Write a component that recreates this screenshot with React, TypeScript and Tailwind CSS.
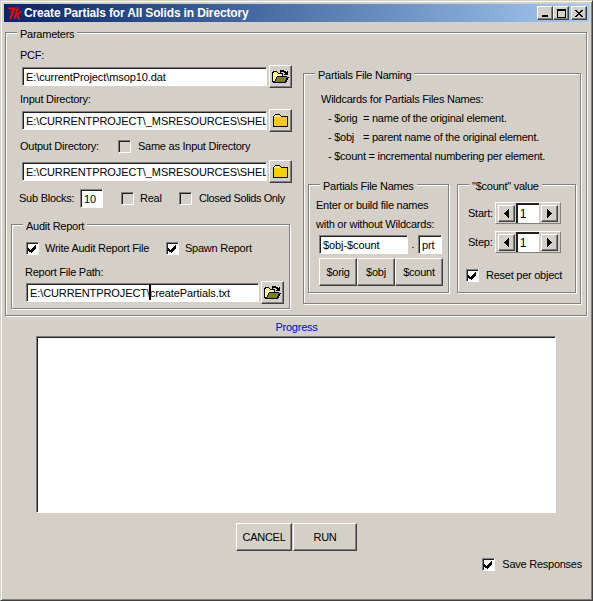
import React from 'react';

const FONT = "font-['Liberation_Sans',Arial,sans-serif] text-[11px] tracking-[-0.25px] text-black";
const BG = 'bg-[#d4d0c8]';
const RAISED = 'border border-[#404040] border-t-white border-l-white bg-[#d4d0c8] shadow-[inset_-1px_-1px_0_#808080]';
const SUNKEN = 'border border-white border-t-[#808080] border-l-[#808080] shadow-[inset_1px_1px_0_#202020]';

function Group({ title, legendLeft, className, children }: { title: string; legendLeft: string; className: string; children?: React.ReactNode }) {
  return (
    <div className={`relative border border-[#808080] shadow-[1px_1px_0_#fff,inset_1px_1px_0_#fff] ${className}`}>
      <span className={`absolute -top-[5px] ${legendLeft} ${BG} px-[3px] leading-[13px] whitespace-nowrap`}>{title}</span>
      {children}
    </div>
  );
}

function Entry({ text, className, children }: { text?: string; className: string; children?: React.ReactNode }) {
  return (
    <div className={`${SUNKEN} bg-white h-[19px] pl-[3px] leading-[18px] overflow-hidden whitespace-nowrap tracking-[-0.1px] ${className}`}>
      {text}
      {children}
    </div>
  );
}

function Check({ checked, className }: { checked?: boolean; className?: string }) {
  return (
    <div className={`${SUNKEN} w-[13px] h-[13px] shrink-0 ${checked ? 'bg-white' : 'bg-[#d4d0c8]'} ${className ?? ''}`}>
      {checked && (
        <svg width="11" height="11" viewBox="0 0 11 11" shapeRendering="crispEdges">
          <path d="M1 5h1v1h1v1h1V6h1V5h1V4h1V3h1V2h1v3H9v1H8v1H7v1H6v1H5v1H4v-1H3V9H2V8H1z" fill="#000" transform="translate(0 -0.5)" />
        </svg>
      )}
    </div>
  );
}

function FolderClosed() {
  return (
    <svg width="17" height="15" viewBox="0 0 17 15" shapeRendering="crispEdges">
      <path d="M1 3h1V2h1V1h5v1h1v1h7v11H1z" fill="#000" />
      <path d="M2 4h13v9H2z" fill="#ffcc00" />
      <path d="M3 3V2h5v1h1v1H2V3z" fill="#ffe680" />
    </svg>
  );
}

function FolderOpen() {
  return (
    <svg width="17" height="15" viewBox="0 0 17 15" shapeRendering="crispEdges">
      <path d="M0 3h1V2h4v1h1v1h5v3h4v1h2v1h-1v2h-1v2h-1v1H1v-1H0z" fill="#000" />
      <path d="M1 4h1V3h3v1h1v1h4v2H5v1H4v2H3v2H1z" fill="#ffff99" />
      <path d="M5 8h10v1h-1v2h-1v2H3v-1h1v-2h1z" fill="#808000" />
      <path d="M8 1h4v1h2v1h1V2h1v4h-4V5h1V4h-1V3H9v1H8z" fill="#000" />
    </svg>
  );
}

function IconButton({ open }: { open?: boolean }) {
  return (
    <div className={`${RAISED} w-[23px] h-[23px] flex items-center justify-center shrink-0`}>
      {open ? <FolderOpen /> : <FolderClosed />}
    </div>
  );
}

function Spin({ label }: { label: string }) {
  return (
    <div className="flex items-center pl-[10px]">
      <span className="w-[27px]">{label}</span>
      <div className="border border-white border-r-[#808080] border-b-[#808080] w-[66px] h-[22px] flex items-center px-[2px]">
        <div className={`${RAISED} w-[17px] h-[17px] flex items-center justify-center`}>
          <svg width="6" height="9" viewBox="0 0 6 9" shapeRendering="crispEdges"><path d="M5 0h1v9H5V8H4V7H3V6H2V5H1V4h1V3h1V2h1V1h1z" fill="#000" /></svg>
        </div>
        <div className="bg-white border-t-2 border-l-2 border-[#202020] w-[24px] h-[20px] mx-[1px] pl-[2px] leading-[18px] tracking-normal text-[12px]">1</div>
        <div className={`${RAISED} w-[17px] h-[17px] ml-[1px] flex items-center justify-center`}>
          <svg width="6" height="9" viewBox="0 0 6 9" shapeRendering="crispEdges"><path d="M0 0h1v1h1v1h1v1h1v1h1v1H4v1H3v1H2v1H1v1H0z" fill="#000" /></svg>
        </div>
      </div>
    </div>
  );
}

function Btn({ label, className }: { label: string; className: string }) {
  return <div className={`${RAISED} flex items-center justify-center ${className}`}>{label}</div>;
}

function App() {
  return (
    <div className={`${FONT} ${BG} w-[593px] h-[601px] overflow-hidden border border-[#d4d0c8] border-r-[#404040] border-b-[#404040] shadow-[inset_1px_1px_0_#fff,inset_-1px_-1px_0_#808080] px-[3px] pt-[3px]`}>
      {/* title bar */}
      <div className="h-[18px] flex items-center bg-gradient-to-r from-[#0a246a] to-[#a6caf0]">
        <svg width="15" height="14" viewBox="0 0 15 14" className="ml-[3px]">
          <path d="M1.5 2.5h6L3 13" fill="none" stroke="#ff0000" strokeWidth="2" />
          <path d="M2.5 6h4.5" fill="none" stroke="#ff0000" strokeWidth="1.2" />
          <path d="M11 1 7.5 13M14.5 5 9.5 9l3 4" fill="none" stroke="#ff0000" strokeWidth="1.7" />
        </svg>
        <span className="font-bold text-white text-[12px] tracking-[-0.15px] ml-[2px] whitespace-nowrap">Create Partials for All Solids in Directory</span>
        <div className="ml-auto flex items-center mr-[2px]">
          <div className={`${RAISED} w-[16px] h-[14px] flex items-end justify-center pb-[2px]`}>
            <div className="w-[6px] h-[2px] bg-black -ml-[1px]" />
          </div>
          <div className={`${RAISED} w-[16px] h-[14px] flex items-center justify-center`}>
            <div className="w-[9px] h-[9px] border border-black border-t-2" />
          </div>
          <div className={`${RAISED} w-[16px] h-[14px] ml-[2px] flex items-center justify-center`}>
            <svg width="8" height="7" viewBox="0 0 8 7" shapeRendering="crispEdges">
              <path d="M0 0h2v1h1v1h2V1h1V0h2v1H7v1H6v1H5v1h1v1h1v1h1v1H6V6H5V5H3v1H2v1H0V6h1V5h1V4h1V3H2V2H1V1H0z" fill="#000" />
            </svg>
          </div>
        </div>
      </div>

      {/* parameters */}
      <Group title="Parameters" legendLeft="left-[11px]" className="ml-[1px] mt-[10px] w-[582px] h-[284px] flex pl-[5px]">
        <div className="w-[292px] shrink-0">
          <div className="pl-[9px] mt-[15px] h-[14px] leading-[14px]">PCF:</div>
          <div className="flex items-center mt-[3px] h-[23px] pl-[11px] gap-[2px]">
            <Entry text="E:\currentProject\msop10.dat" className="w-[245px]" />
            <IconButton open />
          </div>
          <div className="pl-[9px] mt-[4px] h-[14px] leading-[14px]">Input Directory:</div>
          <div className="flex items-center mt-[3px] h-[23px] pl-[11px] gap-[2px]">
            <Entry text="E:\CURRENTPROJECT\_MSRESOURCES\SHELL" className="w-[245px]" />
            <IconButton />
          </div>
          <div className="flex items-center pl-[9px] mt-[7px] h-[14px]">
            <span className="w-[98px]">Output Directory:</span>
            <Check />
            <span className="ml-[7px]">Same as Input Directory</span>
          </div>
          <div className="flex items-center mt-[7px] h-[23px] pl-[11px] gap-[2px]">
            <Entry text="E:\CURRENTPROJECT\_MSRESOURCES\SHELL" className="w-[245px]" />
            <IconButton />
          </div>
          <div className="flex items-center mt-[5px] h-[21px] pl-[8px]">
            <span className="w-[61px]">Sub Blocks:</span>
            <Entry text="10" className="w-[23px]" />
            <Check className="ml-[18px]" />
            <span className="ml-[6px] w-[39px]">Real</span>
            <Check />
            <span className="ml-[7px] tracking-[-0.4px]">Closed Solids Only</span>
          </div>
          <Group title="Audit Report" legendLeft="left-[11px]" className="mt-[15px] w-[279px] h-[85px] pt-[16px]">
            <div className="flex items-center h-[14px] pl-[14px]">
              <Check checked />
              <span className="ml-[6px] w-[121px]">Write Audit Report File</span>
              <Check checked />
              <span className="ml-[6px]">Spawn Report</span>
            </div>
            <div className="pl-[13px] mt-[10px] h-[14px] leading-[14px]">Report File Path:</div>
            <div className="flex items-center mt-[2px] h-[23px] pl-[14px] gap-[2px]">
              <Entry className="w-[233px]">
                E:\CURRENTPROJECT\<span className="inline-block w-[2px] h-[15px] bg-black -mx-[1px] align-[-3px]" />createPartials.txt
              </Entry>
              <IconButton open />
            </div>
          </Group>
        </div>

        <Group title="Partials File Naming" legendLeft="left-[11px]" className="mt-[40px] w-[278px] h-[231px]">
          <div className="pl-[17px] mt-[16px] leading-[19px]">Wildcards for Partials Files Names:</div>
          <div className="pl-[24px] leading-[19px]">
            <div><span className="inline-block w-[35px]">- $orig</span>= name of the original element.</div>
            <div><span className="inline-block w-[35px]">- $obj</span>= parent name of the original element.</div>
            <div><span>- $count</span> = incremental numbering per element.</div>
          </div>
          <div className="flex mt-[18px] pl-[4px] gap-[8px]">
            <Group title="Partials File Names" legendLeft="left-[11px]" className="w-[141px] h-[109px]">
              <div className="pl-[7px] mt-[11px] leading-[19px]">
                <div>Enter or build file names</div>
                <div>with or without Wildcards:</div>
              </div>
              <div className="flex items-center mt-[1px] pl-[10px]">
                <Entry text="$obj-$count" className="w-[89px]" />
                <span className="w-[10px] text-center">.</span>
                <Entry text="prt" className="w-[24px]" />
              </div>
              <div className="flex mt-[4px] pl-[10px]">
                <Btn label="$orig" className="w-[38px] h-[28px]" />
                <Btn label="$obj" className="w-[38px] h-[28px]" />
                <Btn label="$count" className="w-[48px] h-[28px]" />
              </div>
            </Group>
            <Group title={'"$count" value'} legendLeft="left-[11px]" className="w-[119px] h-[109px] pt-[17px]">
              <Spin label="Start:" />
              <div className="mt-[7px]"><Spin label="Step:" /></div>
              <div className="flex items-center mt-[15px] h-[14px] pl-[8px]">
                <Check checked />
                <span className="ml-[7px]">Reset per object</span>
              </div>
            </Group>
          </div>
        </Group>
      </Group>

      {/* progress */}
      <div className="mt-[4px] h-[14px] leading-[14px] text-center text-[#0000ff]">Progress</div>
      <div className={`${SUNKEN} bg-white ml-[32px] mt-[2px] w-[520px] h-[177px]`} />
      <div className="flex justify-center gap-[1px] mt-[10px]">
        <Btn label="CANCEL" className="w-[56px] h-[28px]" />
        <Btn label="RUN" className="w-[64px] h-[28px]" />
      </div>
      <div className="flex items-center justify-end mt-[6px] h-[14px] pr-[7px]">
        <Check checked />
        <span className="ml-[7px]">Save Responses</span>
      </div>
    </div>
  );
}

export default App;
